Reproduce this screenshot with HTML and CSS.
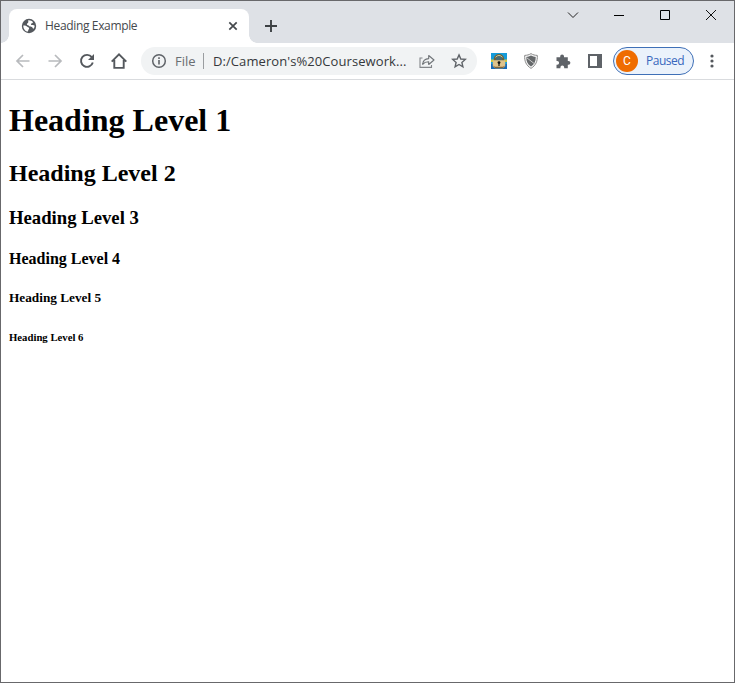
FILE: index.html
```html
<!DOCTYPE html>
<html lang="en">
<head>
<meta charset="utf-8">
<title>Heading Example</title>
<link rel="stylesheet" href="styles.css">
</head>
<body>
<div class="window">
  <header class="tabstrip">
    <div class="tab">
      <svg class="globe" width="16" height="16" viewBox="0 0 16 16"><circle cx="8" cy="8" r="7.2" fill="#54585d"/><path d="M2.3 7.4c1.8-.1 3.2.3 3.8 1.2.5.8 1.7.5 2 1.4.3 1-.9 1.4-1.2 3.6C4 13.200 2.200 10.500 2.300 7.400z" fill="#fff"/><path d="M7.200 2.300c1.900-.2 3.700.5 4.800 1.900-.5 1.400-1.500.7-2 1.600-.4.8.5 1.400 1.500 1.200 1-.2 1.500.3 2.200.7-.1 1.300-.5 2.200-1.200 3.100-.9-.3-.7-1.500-1.600-1.900-1-.4-2.100.1-2.700-.8-.6-1-2-.5-2.300-1.500-.3-1.200 1.500-1.500 1.400-2.500z" fill="#fff"/></svg>
      <span class="tab-title">Heading Example</span>
      <svg class="tab-close" width="10" height="10" viewBox="0 0 10 10"><path d="M1.300 1.300l7.400 7.400M8.700 1.300L1.300 8.700" stroke="#45494d" stroke-width="1.7"/></svg>
    </div>
    <svg class="new-tab" width="14" height="14" viewBox="0 0 14 14"><path d="M7 1v12M1 7h12" stroke="#3c4043" stroke-width="1.900"/></svg>
    <div class="controls">
      <svg width="46" height="28" viewBox="0 0 46 28"><path d="M18 11.500l5 5 5-5" fill="none" stroke="#222" stroke-width="1"/></svg>
      <svg width="46" height="28" viewBox="0 0 46 28"><path d="M18 14.500h10" stroke="#000"/></svg>
      <svg width="46" height="28" viewBox="0 0 46 28"><path d="M18.500 9.500h9v9h-9z" fill="none" stroke="#000"/></svg>
      <svg width="46" height="28" viewBox="0 0 46 28"><path d="M18 9l10 10M28 9L18 19" stroke="#111" stroke-width="1"/></svg>
    </div>
  </header>
  <nav class="toolbar">
    <svg class="tool" width="32" height="32" viewBox="0 0 32 32"><path d="M22.500 16H10M16 10l-6 6 6 6" fill="none" stroke="#b8babd" stroke-width="1.700"/></svg>
    <svg class="tool" width="32" height="32" viewBox="0 0 32 32"><path d="M9.500 16H22M16 10l6 6-6 6" fill="none" stroke="#b8babd" stroke-width="1.700"/></svg>
    <svg class="tool" width="32" height="32" viewBox="0 0 32 32"><path d="M20.800 12.200A6 6 0 1 0 21.800 17.500" fill="none" stroke="#54585d" stroke-width="1.900"/><path d="M23 9v6h-6z" fill="#54585d"/></svg>
    <svg class="tool" width="32" height="32" viewBox="0 0 32 32"><path d="M8.700 16.700L16 9.300l7.300 7.400M11.300 15v7.900h9.400V15" fill="none" stroke="#54585d" stroke-width="1.900"/></svg>
    <div class="omnibox">
      <svg class="info" width="16" height="16" viewBox="0 0 16 16"><circle cx="8" cy="8" r="6.300" fill="none" stroke="#5f6368" stroke-width="1.500"/><path d="M8 7v4.500M8 4.300v1.600" stroke="#5f6368" stroke-width="1.600"/></svg>
      <span class="scheme">File</span>
      <span class="divider"></span>
      <span class="url">D:/Cameron's%20Coursework...</span>
      <svg class="share" width="16" height="16" viewBox="0 0 16 16"><path d="M3.500 5H1v9.400h11.500V12" fill="none" stroke="#83868a" stroke-width="1.100"/><path d="M3.700 11.300c.3-3.700 2.300-5.600 6-5.700V2.500L15 7l-5.300 4.500V8.700c-2.900-.1-4.500.7-6 2.600z" fill="none" stroke="#6f7377" stroke-width="1.100" stroke-linejoin="round"/></svg>
      <svg class="star" width="16" height="16" viewBox="0 0 16 16"><path d="M8 1.900l1.800 4.100 4.500.4-3.400 3 1 4.400L8 11.500l-3.900 2.300 1-4.400-3.400-3 4.500-.4z" fill="none" stroke="#5f6368" stroke-width="1.400"/></svg>
    </div>
    <div class="extensions">
      <svg width="16" height="16" viewBox="0 0 16 16"><path d="M0 0h16v16H0z" fill="#159bd9"/><path d="M0 11h16v5H0z" fill="#176ab7"/><path d="M0 6.500h4L2 9H0zM12 6.500h4V9h-2z" fill="#c9c640"/><path d="M3.800 8V6a4.200 3.900 0 0 1 8.400 0v2" fill="#4b6a70" stroke="#6d6238" stroke-width="2"/><path d="M4.500 4.300Q8 .5 11.500 4.300" fill="none" stroke="#c9c291" stroke-width="1"/><path d="M1.800 7.200h12.400v6L12 15.300H4l-2.200-2.100z" fill="#dfc38b"/><path d="M1.800 12.600L4 15.300h8l2.200-2.700-2.200 1.200H4z" fill="#80643b"/><circle cx="8" cy="9.600" r="1.400" fill="#111"/><path d="M7.400 9.600h1.200v3.400H7.400z" fill="#111"/></svg>
      <svg width="16" height="16" viewBox="0 0 16 16"><path d="M8 .6c2 1.300 4 1.700 6.300 1.800.4 5.700-1.400 10-6.300 13C3.100 12.400 1.300 8.100 1.700 2.400 4 2.300 6 1.900 8 .6z" fill="#f5f5f5" stroke="#8c8c8c"/><path d="M8 2.600c1.600.8 3.100 1.200 4.700 1.300.1 4.300-1.200 7.300-4.700 9.600-3.500-2.300-4.800-5.300-4.700-9.600C4.900 3.800 6.400 3.400 8 2.600z" fill="#66696b"/><path d="M3.700 4.700l8.300 6.500" stroke="#c8c8c8" stroke-width="1"/></svg>
      <svg width="16" height="16" viewBox="0 0 16 16"><path d="M1.500 4.200h3.700v-.9a1.900 1.900 0 0 1 3.800 0v.9h3.800v3.700h.7a1.900 1.900 0 0 1 0 3.800h-.7v3.600H9.200v-.8a1.900 1.900 0 0 0-3.800 0v.8H1.500v-3.600h.7a1.900 1.900 0 0 0 0-3.800h-.7z" fill="#5f6368"/></svg>
      <svg width="16" height="16" viewBox="0 0 16 16"><path d="M1 1h14v14H1z" fill="#5f6368"/><path d="M3 3h7v10H3z" fill="#fff"/></svg>
    </div>
    <div class="profile"><span class="avatar">C</span><span class="status">Paused</span></div>
    <svg class="menu" width="16" height="16" viewBox="0 0 16 16"><g fill="#54585d"><circle cx="8" cy="3" r="1.600"/><circle cx="8" cy="8" r="1.600"/><circle cx="8" cy="13" r="1.600"/></g></svg>
  </nav>
  <main class="page">
    <h1>Heading Level 1</h1>
    <h2>Heading Level 2</h2>
    <h3>Heading Level 3</h3>
    <h4>Heading Level 4</h4>
    <h5>Heading Level 5</h5>
    <h6>Heading Level 6</h6>
  </main>
</div>
</body>
</html>
```
FILE: styles.css
```css
* { box-sizing: border-box; }
body { margin: 0; background: #fff; }
svg { display: block; flex: none; }
.window {
  height: 683px;
  border: 1px solid #68686b;
  overflow: hidden;
  font-family: "Open Sans", "Noto Sans", sans-serif;
}
.tabstrip {
  display: flex;
  height: 42px;
  background: #dee1e6;
}
.tab {
  position: relative;
  display: flex;
  align-items: center;
  width: 240px;
  height: 34px;
  margin: 8px 0 0 8px;
  padding: 0 11px 0 12px;
  border-radius: 8px 8px 0 0;
  background: #fff;
}
.tab::before, .tab::after {
  content: "";
  position: absolute;
  bottom: 0;
  width: 8px;
  height: 8px;
}
.tab::before { left: -8px; background: radial-gradient(circle at 0 0, transparent 7.5px, #fff 8px); }
.tab::after { right: -8px; background: radial-gradient(circle at 100% 0, transparent 7.5px, #fff 8px); }
.tab-title {
  margin-left: 8px;
  color: #45494d;
  font-size: 12px;
  line-height: 16px;
  letter-spacing: -0.35px;
  white-space: nowrap;
}
.tab-close { margin-left: auto; }
.new-tab { margin: 18px 0 0 15px; }
.controls { display: flex; margin-left: auto; }
.toolbar {
  display: flex;
  align-items: center;
  height: 37px;
  padding-left: 6px;
  border-bottom: 1px solid #d9dbde;
  background: #fff;
}
.omnibox {
  display: flex;
  align-items: center;
  width: 336px;
  height: 28px;
  margin-left: 6px;
  padding: 0 10px;
  border-radius: 14px;
  background: #f1f3f4;
  font-size: 13px;
  line-height: 18px;
  white-space: nowrap;
}
.scheme { width: 22px; margin-left: 8px; color: #6a6e72; }
.divider { width: 1px; height: 16px; margin: 0 9px 0 6px; background: #9a9da0; }
.url { width: 195px; color: #35383b; letter-spacing: 0.08px; }
.share { margin-left: 11px; }
.star { margin-left: 16px; }
.extensions { display: flex; gap: 16px; margin-left: 14px; }
.profile {
  display: flex;
  align-items: center;
  width: 81px;
  height: 28px;
  margin-left: 10px;
  padding-left: 2px;
  border: 1px solid #3f70b7;
  border-radius: 14px;
  background: #ebf2fb;
}
.avatar {
  width: 22px;
  height: 22px;
  border-radius: 50%;
  background: #ef6c00;
  color: #fff;
  font-family: Roboto, sans-serif;
  font-size: 12px;
  line-height: 22px;
  text-align: center;
}
.status {
  margin-left: 8px;
  color: #3867bd;
  font-size: 12px;
  line-height: 16px;
  letter-spacing: -0.5px;
}
.menu { margin-left: 10px; }
.page {
  padding: 0.2px 8px 0;
  overflow: hidden;
  color: #000;
  font-family: "Liberation Serif", serif;
  font-size: 16px;
}
```
